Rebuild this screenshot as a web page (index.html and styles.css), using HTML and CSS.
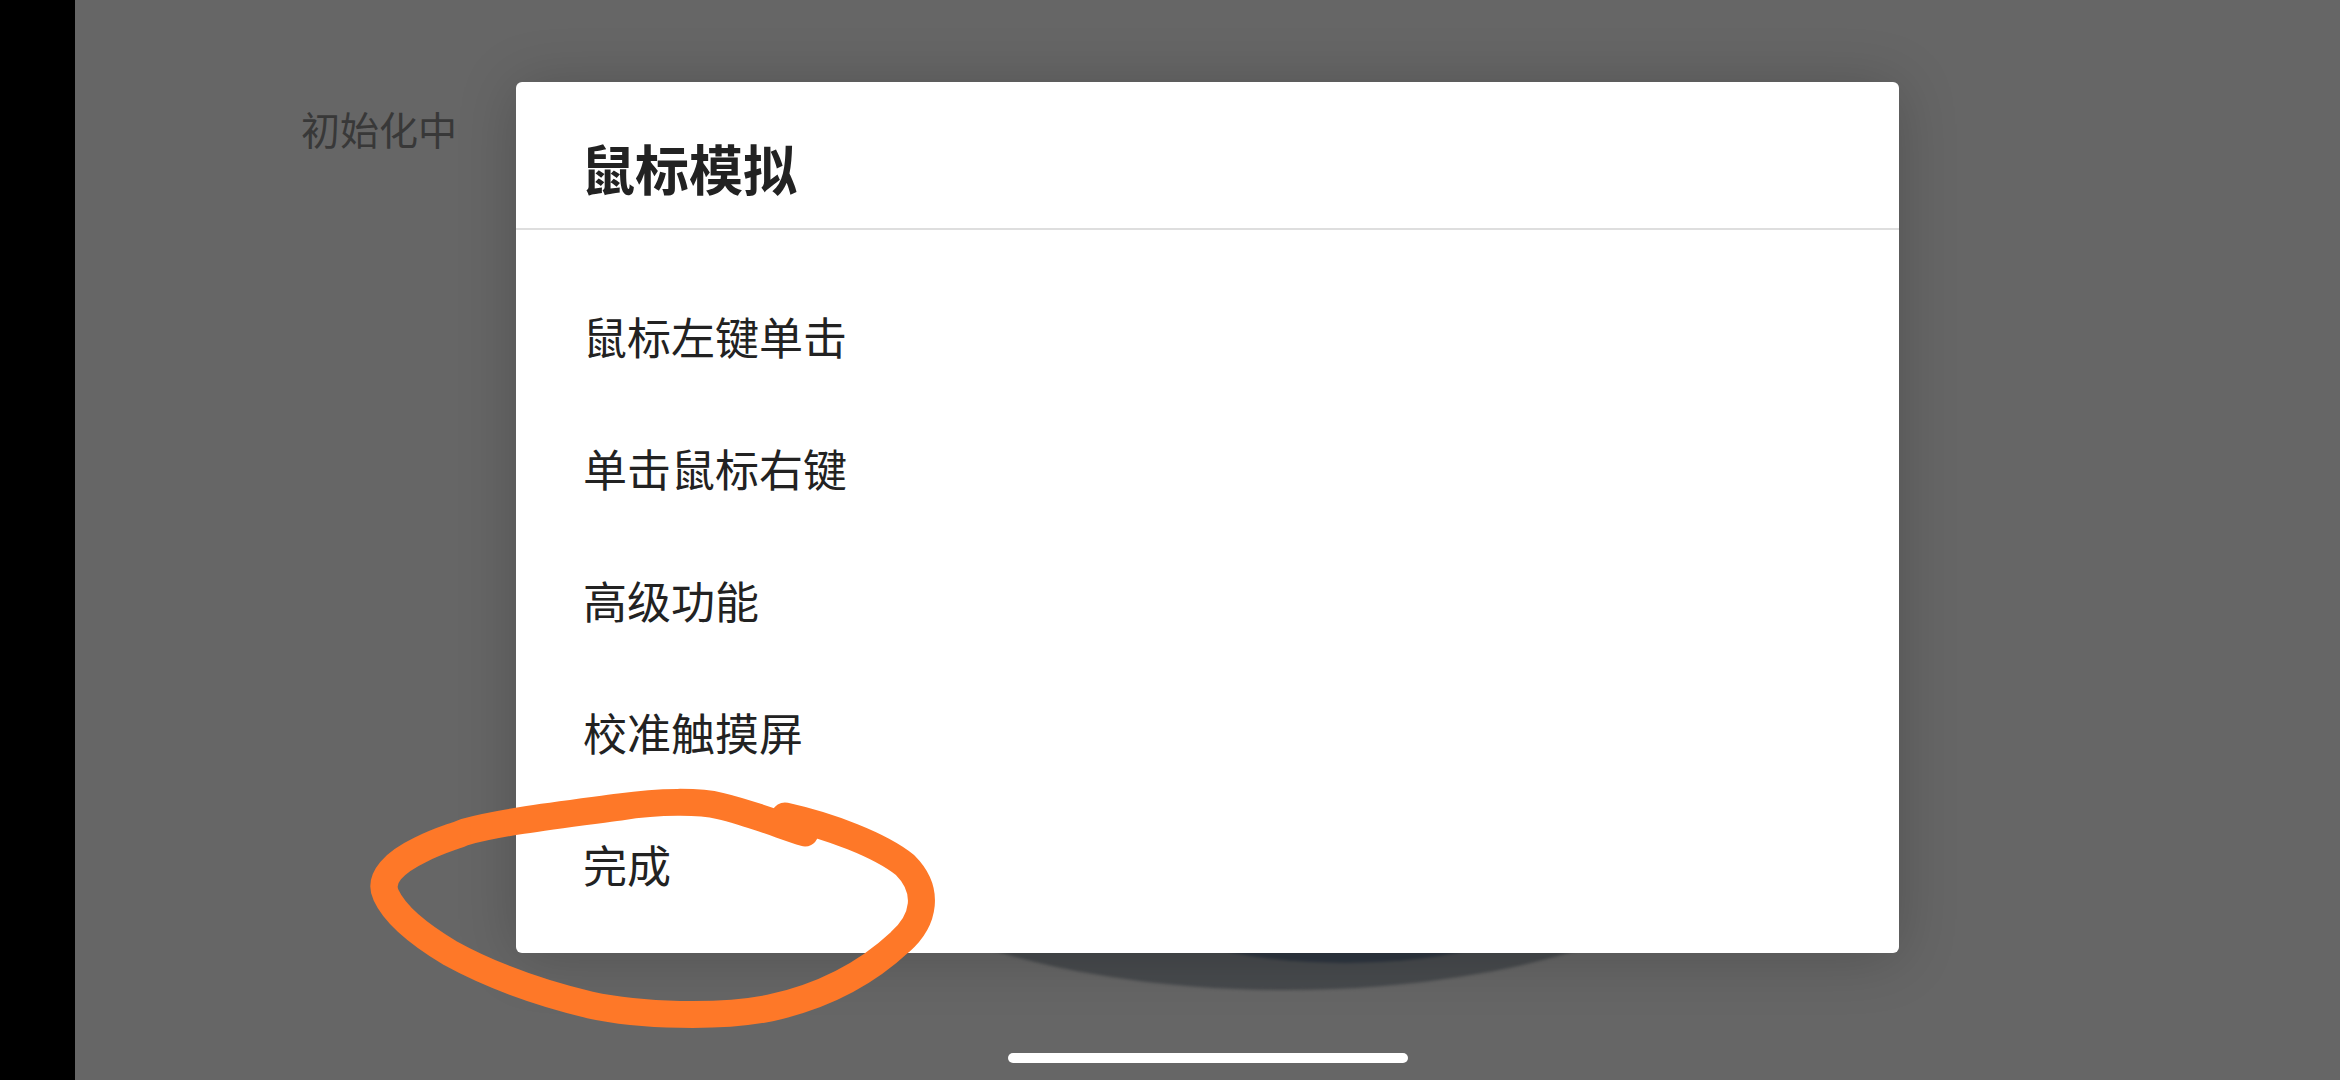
FILE: index.html
```html
<!DOCTYPE html>
<html lang="zh-CN">
<head>
<meta charset="utf-8">
<title>鼠标模拟</title>
<link rel="stylesheet" href="styles.css">
</head>
<body>
<div class="screen">
  <div class="edge"></div>
  <main class="app">
    <div class="app-content">
      <div class="status">初始化中</div>
      <div class="disc"><div class="disc-inner"></div></div>
    </div>
    <div class="overlay">
      <section class="dialog">
        <header class="dialog-head">
          <h1 class="dialog-title">鼠标模拟</h1>
        </header>
        <ul class="menu">
          <li class="menu-item">鼠标左键单击</li>
          <li class="menu-item">单击鼠标右键</li>
          <li class="menu-item">高级功能</li>
          <li class="menu-item">校准触摸屏</li>
          <li class="menu-item">完成</li>
        </ul>
      </section>
    </div>
    <div class="home-bar"></div>
  </main>
</div>
<svg class="annotation" width="2340" height="1080" viewBox="0 0 2340 1080" xmlns="http://www.w3.org/2000/svg">
  <path d="M 785 816 C 830 826, 880 845, 905 865 C 930 890, 925 920, 900 942 C 870 970, 830 995, 770 1008 C 720 1018, 640 1016, 590 1005 C 540 993, 490 975, 450 953 C 420 935, 395 915, 386 895 C 378 878, 395 862, 420 850 C 440 840, 450 838, 465 832 C 500 822, 560 815, 620 807 C 660 801, 700 801, 720 806 C 750 813, 780 825, 805 833" fill="none" stroke="#fe7828" stroke-width="27" stroke-linecap="round" stroke-linejoin="round"/>
</svg>
</body>
</html>
```

FILE: styles.css
```css
html, body {
  margin: 0;
  padding: 0;
  width: 2340px;
  height: 1080px;
  overflow: hidden;
  background: #000;
  font-family: "Noto Sans CJK SC", "Noto Sans", sans-serif;
}

.screen {
  display: flex;
  width: 2340px;
  height: 1080px;
}

.edge {
  width: 75px;
  flex: none;
  background: #000;
}

.app {
  flex: 1;
  position: relative;
  background: #666666;
  overflow: hidden;
}

.app-content {
  padding: 109px 0 0 226px;
}

.status {
  font-size: 39px;
  line-height: 1;
  color: #383838;
}

.disc {
  position: absolute;
  left: 720px;
  top: 590px;
  width: 980px;
  height: 400px;
  border-radius: 50%;
  background: #474a4d;
  filter: blur(1.5px);
}

.disc-inner {
  position: absolute;
  left: 350px;
  top: 253px;
  width: 400px;
  height: 120px;
  border-radius: 50%;
  background: #2e3640;
}

.overlay {
  position: absolute;
  inset: 0;
  display: flex;
  justify-content: center;
  align-items: flex-start;
  padding-top: 82px;
}

.dialog {
  width: 1383px;
  height: 871px;
  box-sizing: border-box;
  background: #ffffff;
  border-radius: 6px;
  box-shadow: 0 4px 60px rgba(0, 0, 0, 0.2);
  display: flex;
  flex-direction: column;
}

.dialog-head {
  height: 148px;
  box-sizing: border-box;
  padding: 59px 0 0 65px;
  border-bottom: 2px solid #dedede;
}

.dialog-title {
  margin: 0;
  font-size: 54px;
  line-height: 1;
  font-weight: 700;
  color: #222222;
}

.menu {
  list-style: none;
  margin: 0;
  padding: 40px 0 23px 0;
}

.menu-item {
  height: 132px;
  display: flex;
  align-items: center;
  padding-left: 67px;
  font-size: 44px;
  line-height: 1;
  color: #222222;
}

.home-bar {
  position: absolute;
  left: 50%;
  bottom: 17px;
  width: 400px;
  height: 10px;
  margin-left: -200px;
  border-radius: 5px;
  background: #ffffff;
}

.annotation {
  position: absolute;
  left: 0;
  top: 0;
  pointer-events: none;
}
```
